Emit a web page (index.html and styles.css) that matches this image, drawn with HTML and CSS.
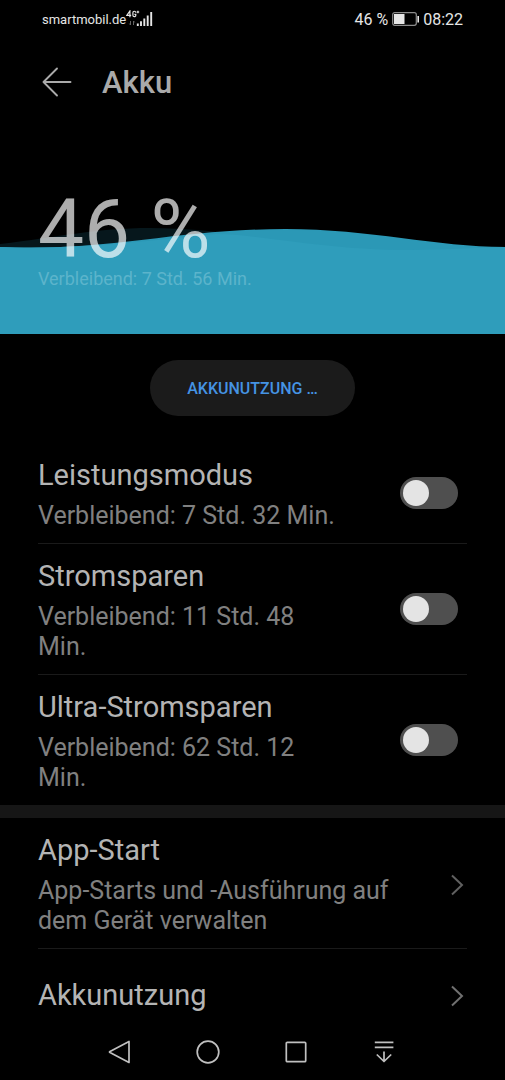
FILE: index.html
```html
<!DOCTYPE html>
<html lang="de">
<head>
    <meta charset="UTF-8">
    <meta name="viewport" content="width=device-width, initial-scale=1.0">
    <title>Akku</title>
    <link rel="stylesheet" href="styles.css">
</head>
<body>
    <div class="status-bar">
        <div class="status-left">
            <span class="carrier">smartmobil.de</span>
            <svg class="signal" width="28" height="18" viewBox="0 0 28 18" fill="none" stroke="#e6e6e6">
                <path d="M3.9 7.2V1L.8 5.4H5.2M9.8 2.6C9.6 .8 6.9 .8 6.9 2.8V5.2C6.9 7.2 9.8 7.2 9.8 5.2V4.3H8.4M10.6 2h2.6M11.9 .7v2.6" stroke-width="1.2"/>
                <path d="M4.5 11v4M3.4 13.6L4.5 15M7.5 15v-4M7.5 11l1.2 1.4" stroke="#666"/>
                <path d="M11.8 16v-2.4M15 16v-4.8M18.3 16V8.4M21.7 16V5.4M25.2 16V2" stroke-width="1.9"/>
            </svg>
        </div>
        <div class="status-right">
            <span>46 %</span>
            <svg width="27" height="14" viewBox="0 0 27 14" fill="none">
                <rect x=".7" y=".7" width="23.6" height="12.6" rx="2" stroke="#8c8c8c" stroke-width="1.2"/>
                <rect x="2" y="2" width="10.5" height="10" fill="#e6e6e6"/>
                <rect x="25.4" y="4" width="1.6" height="6.5" fill="#e6e6e6"/>
            </svg>
            <span>08:22</span>
        </div>
    </div>

    <header class="header">
        <button class="back" aria-label="Zurück">
            <svg width="30" height="30" viewBox="0 0 30 30" fill="none" stroke="#aaa" stroke-width="1.9" stroke-linecap="round" stroke-linejoin="round">
                <path d="M28.5 15H1.5M15 1.5L1.5 15L15 28.5"/>
            </svg>
        </button>
        <h1>Akku</h1>
    </header>

    <main>
        <section class="battery">
            <svg class="wave" viewBox="0 0 504 106" preserveAspectRatio="none">
                <path d="M0 16C60 9 95 0 150 0C235 0 320 22 410 22C450 22 480 18 504 19V106H0Z" fill="#06171c"/>
                <path d="M0 19C110 24 175 1 285 1C370 1 435 19 504 19V106H0Z" fill="#2b98b6"/>
                <path d="M0 19C75 22 145 13 215 6C260 6 320 22 410 22C450 22 480 19 504 19V106H0Z" fill="#2f9dbb"/>
            </svg>
            <div class="percent">46 %</div>
            <div class="remaining">Verbleibend: 7 Std. 56 Min.</div>
        </section>

        <button class="usage-button">AKKUNUTZUNG …</button>

        <section class="list">
            <div class="row">
                <label class="row-text" for="performance">
                    <span class="row-title">Leistungsmodus</span>
                    <span class="row-sub">Verbleibend: 7 Std. 32 Min.</span>
                </label>
                <input class="switch" type="checkbox" id="performance">
            </div>
            <div class="row">
                <label class="row-text" for="saving">
                    <span class="row-title">Stromsparen</span>
                    <span class="row-sub">Verbleibend: 11 Std. 48 Min.</span>
                </label>
                <input class="switch" type="checkbox" id="saving">
            </div>
            <div class="row">
                <label class="row-text" for="ultra">
                    <span class="row-title">Ultra-Stromsparen</span>
                    <span class="row-sub">Verbleibend: 62 Std. 12 Min.</span>
                </label>
                <input class="switch" type="checkbox" id="ultra">
            </div>
        </section>

        <div class="separator"></div>

        <section class="list">
            <a class="row" href="#">
                <span class="row-text">
                    <span class="row-title">App-Start</span>
                    <span class="row-sub">App-Starts und -Ausführung auf dem Gerät verwalten</span>
                </span>
                <svg class="chevron" width="14" height="22" viewBox="0 0 14 22" fill="none" stroke="#606060" stroke-width="2">
                    <path d="M2 1.5L12 11L2 20.5"/>
                </svg>
            </a>
            <a class="row row-single" href="#">
                <span class="row-text">
                    <span class="row-title">Akkunutzung</span>
                </span>
                <svg class="chevron" width="14" height="22" viewBox="0 0 14 22" fill="none" stroke="#707070" stroke-width="2">
                    <path d="M2 1.5L12 11L2 20.5"/>
                </svg>
            </a>
        </section>
    </main>

    <nav class="nav-bar">
        <button aria-label="Zurück">
            <svg width="24" height="24" viewBox="0 0 24 24">
                <path d="M21 1.5V22.5L2 12.6Q1 12 2 11.4Z"/>
            </svg>
        </button>
        <button aria-label="Startseite">
            <svg width="24" height="24" viewBox="0 0 24 24">
                <circle cx="12" cy="12" r="10.8"/>
            </svg>
        </button>
        <button aria-label="Letzte Apps">
            <svg width="24" height="24" viewBox="0 0 24 24">
                <rect x="2.3" y="2.3" width="19.4" height="19.4" rx="1"/>
            </svg>
        </button>
        <button aria-label="Benachrichtigungen">
            <svg width="24" height="24" viewBox="0 0 24 24">
                <path d="M2.8 2.3h18.6M2.8 7.3h18.6M12 11.5v10M4.8 14.5L12 21.5L19.2 14.5"/>
            </svg>
        </button>
    </nav>
</body>
</html>
```
FILE: styles.css
```css
* {
    box-sizing: border-box;
}
body {
    margin: 0;
    min-height: 100vh;
    display: flex;
    flex-direction: column;
    background: #000;
    color: #b4b4b4;
    font-family: Roboto, "Liberation Sans", sans-serif;
}
button {
    border: none;
    padding: 0;
    background: none;
    font-family: inherit;
    cursor: pointer;
}
svg {
    display: block;
}
.status-bar {
    display: flex;
    justify-content: space-between;
    align-items: center;
    height: 38px;
    padding: 0 42px;
    color: #e6e6e6;
}
.status-left {
    display: flex;
    align-items: center;
}
.carrier {
    font-size: 13px;
}
.status-right {
    display: flex;
    align-items: center;
    gap: 4px;
    font-size: 16px;
}
.header {
    display: flex;
    align-items: center;
    gap: 30px;
    height: 88px;
    padding: 0 42px;
}
h1 {
    margin: 0;
    font-size: 31px;
    font-weight: 500;
    color: #aaa;
}
.battery {
    position: relative;
    height: 208px;
    padding: 64px 38px 0;
}
.wave {
    position: absolute;
    left: 0;
    bottom: 0;
    width: 100%;
    height: 106px;
}
.percent {
    position: relative;
    font-size: 82px;
    line-height: 78px;
    color: rgba(255, 255, 255, 0.68);
}
.remaining {
    position: relative;
    font-size: 18px;
    line-height: 22px;
    color: #5cb4cb;
}
.usage-button {
    display: block;
    min-width: 205px;
    height: 56px;
    margin: 26px auto 27px;
    border-radius: 28px;
    background: #1b1b1b;
    color: #4593e3;
    font-size: 16px;
    font-weight: 500;
}
.row {
    display: flex;
    align-items: center;
    margin: 0 38px;
    padding: 15px 0 12px;
    border-bottom: 1px solid #1a1a1a;
    color: inherit;
    text-decoration: none;
}
.row:last-child {
    border-bottom: none;
}
.row-single {
    min-height: 90px;
}
.row-text {
    flex: 1;
}
.row-title {
    display: block;
    font-size: 29px;
    line-height: 35px;
}
.row-sub {
    display: block;
    margin-top: 8px;
    font-size: 25px;
    line-height: 30px;
    color: #808080;
}
.switch {
    appearance: none;
    flex: none;
    width: 58px;
    height: 32px;
    margin: 0 9px 4px 60px;
    padding: 3px;
    border-radius: 16px;
    background: #4f4f4f;
    cursor: pointer;
}
.switch::before {
    content: "";
    display: block;
    width: 26px;
    height: 26px;
    border-radius: 50%;
    background: #e4e4e4;
}
.switch:checked::before {
    margin-left: auto;
}
.chevron {
    flex: none;
    margin: 0 3px 0 20px;
}
.separator {
    height: 13px;
    background: #161616;
}
.nav-bar {
    display: flex;
    justify-content: center;
    gap: 64px;
    margin-top: auto;
    padding: 0 2px 16px 0;
}
.nav-bar svg {
    fill: none;
    stroke: #c0c0c0;
    stroke-width: 1.7;
    stroke-linejoin: round;
}
```
